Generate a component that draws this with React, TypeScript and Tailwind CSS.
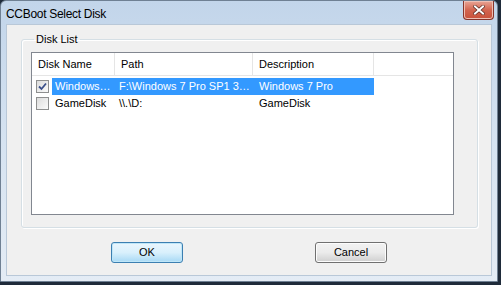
const font = "font-['Liberation_Sans',Arial,sans-serif]";

function CheckBox({ checked }: { checked?: boolean }) {
  return (
    <div className="w-[13px] h-[13px] border border-[#8e8f8f] bg-gradient-to-br from-[#dcdcdc] to-[#fbfbfb] flex items-center justify-center">
      {checked && (
        <svg width="9" height="9" viewBox="0 0 9 9">
          <path d="M1 4.5 L3.5 7 L8 1.5" fill="none" stroke="#3a4f8a" strokeWidth="1.8" />
        </svg>
      )}
    </div>
  );
}

function Button({ label, primary }: { label: string; primary?: boolean }) {
  return (
    <button
      className={
        "w-[72px] h-[21px] rounded-[3px] border text-[11px] text-black flex items-center justify-center " +
        (primary
          ? "border-[#3c7fb1] bg-gradient-to-b from-[#eaf6fd] via-[#d9f0fc] to-[#a7d9f5] shadow-[inset_0_0_0_1px_#bfe6f8]"
          : "border-[#707070] bg-gradient-to-b from-[#f2f2f2] via-[#ebebeb] to-[#cfcfcf] shadow-[inset_0_0_0_1px_#fcfcfc]")
      }
    >
      {label}
    </button>
  );
}

export default function App() {
  const cols = ["w-[83px]", "w-[138px]", "w-[121px]"];

  return (
    <div className={"w-[501px] h-[285px] bg-[#1f2b3a] overflow-hidden " + font}>
      {/* window frame */}
      <div className="w-[498px] h-[282px] rounded-t-[6px] border border-[#6f8093] bg-gradient-to-b from-[#c2d5ea] via-[#d6e3f1] to-[#e4ecf5] flex flex-col">
        {/* title bar */}
        <div className="h-[23px] flex items-start justify-between pl-[5px] pr-[3px]">
          <span className="mt-[4px] text-[12px] tracking-[-0.3px] text-black">CCBoot Select Disk</span>
          <div className="w-[31px] h-[19px] rounded-b-[4px] border border-t-0 border-[#86342a] bg-gradient-to-b from-[#e8a596] via-[#d2644f] to-[#c8513a] shadow-[inset_0_0_0_1px_#eebfb4] flex items-center justify-center">
            <svg width="12" height="10" viewBox="0 0 12 10">
              <path d="M2 1.5 L10 8.5 M10 1.5 L2 8.5" stroke="#5a2a22" strokeWidth="3.4" strokeLinecap="square" />
              <path d="M2 1.5 L10 8.5 M10 1.5 L2 8.5" stroke="#ffffff" strokeWidth="2" strokeLinecap="square" />
            </svg>
          </div>
        </div>

        {/* client area */}
        <div className="mx-[5px] mb-[5px] flex-1 bg-[#f0f0f0] border border-[#b9c8d8] flex flex-col">
          <fieldset className="ml-[14px] mt-[7px] w-[457px] h-[196px] border border-[#d5dfe5] rounded-[3px] shadow-[inset_1px_1px_0_#ffffff,1px_1px_0_#ffffff] pl-[9px] pt-[6px]">
            <legend className="ml-[3px] px-[2px] text-[11px] leading-[14px] text-black">Disk List</legend>

            {/* list view */}
            <div className="w-[423px] h-[163px] border border-[#828790] bg-white text-[11px] text-black">
              <div className="h-[23px] flex border-b border-[#e5e5e5]">
                {["Disk Name", "Path", "Description"].map((h, i) => (
                  <div key={h} className={cols[i] + " border-r border-[#e5e5e5] flex items-center pl-[6px]"}>
                    {h}
                  </div>
                ))}
              </div>

              <div className="mt-[2px] h-[17px] flex items-center">
                <div className="w-[20px] pl-[4px]">
                  <CheckBox checked />
                </div>
                <div className="h-full flex items-center bg-[#3399ff] text-white">
                  <div className="w-[63px] pl-[3px]">Windows…</div>
                  <div className="w-[138px] pl-[4px]">F:\Windows 7 Pro SP1 3…</div>
                  <div className="w-[121px] pl-[6px]">Windows 7 Pro</div>
                </div>
              </div>

              <div className="h-[17px] flex items-center">
                <div className="w-[20px] pl-[4px]">
                  <CheckBox />
                </div>
                <div className="w-[63px] pl-[3px]">GameDisk</div>
                <div className="w-[138px] pl-[4px]">{"\\\\.\\D:"}</div>
                <div className="w-[121px] pl-[6px]">GameDisk</div>
              </div>
            </div>
          </fieldset>

          {/* buttons */}
          <div className="mt-[14px] pl-[104px] flex gap-[132px]">
            <Button label="OK" primary />
            <Button label="Cancel" />
          </div>
        </div>
      </div>
    </div>
  );
}
